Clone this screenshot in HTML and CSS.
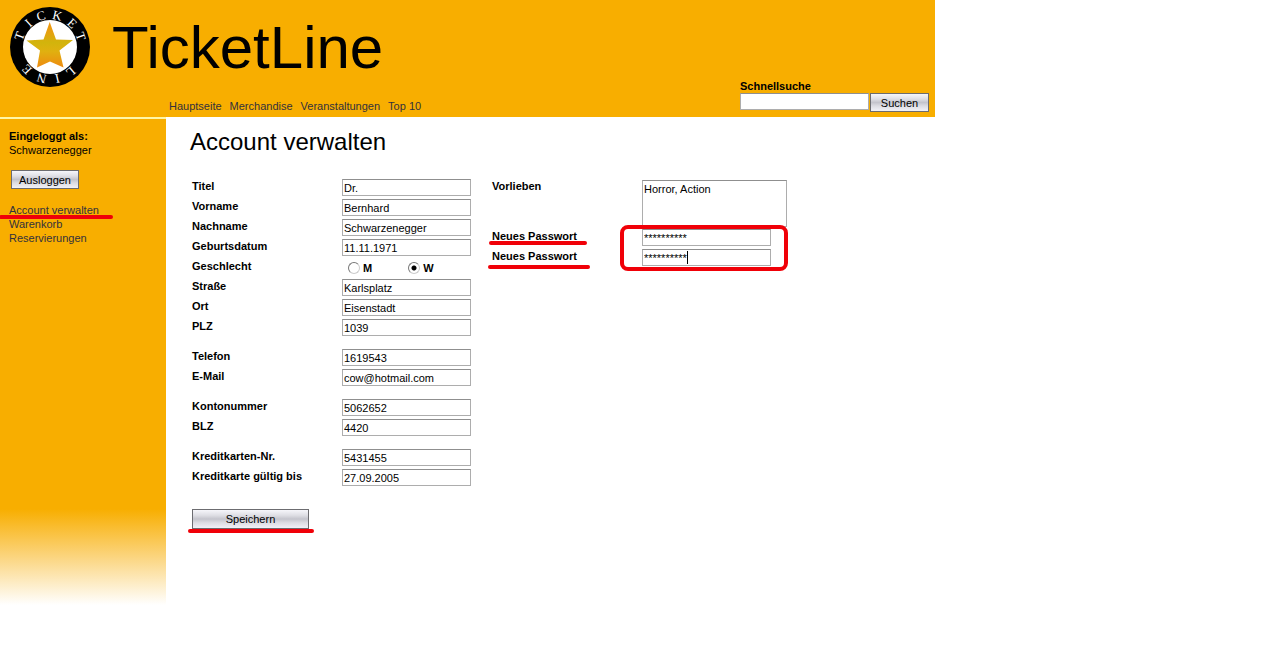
FILE: index.html
```html
<!DOCTYPE html>
<html lang="de">
<head>
<meta charset="utf-8">
<title>TicketLine - Account verwalten</title>
<link rel="stylesheet" href="styles.css">
</head>
<body>
<header class="header">
  <div class="brand">
    <div class="brand-row">
      <svg class="logo" viewBox="0 0 80 80" role="img" aria-label="TicketLine Logo">
        <defs>
          <linearGradient id="star" x1="0" y1="0" x2="0" y2="1">
            <stop offset="0" stop-color="#f0940c"/>
            <stop offset="0.22" stop-color="#e6a010"/>
            <stop offset="0.45" stop-color="#d2b40c"/>
            <stop offset="0.65" stop-color="#e0b010"/>
            <stop offset="1" stop-color="#ee8a10"/>
          </linearGradient>
        </defs>
        <circle cx="40" cy="40" r="40" fill="#000"/>
        <circle cx="40" cy="40" r="27" fill="#fff"/>
        <path fill="url(#star)" d="M39.700 15L46 32.500L63 33L49.500 43.500L53.500 60.500L40 54.500L27 60.500L30 43.500L16.500 33.500L33.500 32.500Z"/>
        <g class="logo-text">
          <text x="40" y="12" transform="rotate(-70 40 40)">T</text>
          <text x="40" y="12" transform="rotate(-42 40 40)">I</text>
          <text x="40" y="12" transform="rotate(-16 40 40)">C</text>
          <text x="40" y="12" transform="rotate(13 40 40)">K</text>
          <text x="40" y="12" transform="rotate(43 40 40)">E</text>
          <text x="40" y="12" transform="rotate(71 40 40)">T</text>
          <text x="40" y="12" transform="rotate(140 40 40)">L</text>
          <text x="40" y="12" transform="rotate(167 40 40)">I</text>
          <text x="40" y="12" transform="rotate(195 40 40)">N</text>
          <text x="40" y="12" transform="rotate(226 40 40)">E</text>
        </g>
      </svg>
      <div class="brand-name">TicketLine</div>
    </div>
    <nav class="top-nav">
      <a href="#">Hauptseite</a>
      <a href="#">Merchandise</a>
      <a href="#">Veranstaltungen</a>
      <a href="#">Top 10</a>
    </nav>
  </div>
  <form class="search">
    <label for="suche">Schnellsuche</label>
    <div class="search-row">
      <input class="field" id="suche" type="text">
      <button class="btn btn-search" type="button">Suchen</button>
    </div>
  </form>
</header>
<div class="page">
  <aside class="sidebar">
    <strong>Eingeloggt als:</strong>
    <span>Schwarzenegger</span>
    <button class="btn btn-logout" type="button">Ausloggen</button>
    <nav class="side-nav">
      <a class="marked" href="#">Account verwalten</a>
      <a href="#">Warenkorb</a>
      <a href="#">Reservierungen</a>
    </nav>
  </aside>
  <main class="main">
    <h1>Account verwalten</h1>
    <form>
      <div class="columns">
        <div class="column">
          <div class="group">
            <div class="row"><label for="titel">Titel</label><input class="field" id="titel" type="text" value="Dr."></div>
            <div class="row"><label for="vorname">Vorname</label><input class="field" id="vorname" type="text" value="Bernhard"></div>
            <div class="row"><label for="nachname">Nachname</label><input class="field" id="nachname" type="text" value="Schwarzenegger"></div>
            <div class="row"><label for="geburt">Geburtsdatum</label><input class="field" id="geburt" type="text" value="11.11.1971"></div>
            <div class="row" role="radiogroup" aria-labelledby="geschlecht">
              <span id="geschlecht">Geschlecht</span>
              <div class="radios">
                <label><input type="radio" name="g">M</label>
                <label><input type="radio" name="g" checked>W</label>
              </div>
            </div>
            <div class="row"><label for="strasse">Straße</label><input class="field" id="strasse" type="text" value="Karlsplatz"></div>
            <div class="row"><label for="ort">Ort</label><input class="field" id="ort" type="text" value="Eisenstadt"></div>
            <div class="row"><label for="plz">PLZ</label><input class="field" id="plz" type="text" value="1039"></div>
          </div>
          <div class="group">
            <div class="row"><label for="telefon">Telefon</label><input class="field" id="telefon" type="text" value="1619543"></div>
            <div class="row"><label for="email">E-Mail</label><input class="field" id="email" type="text" value="cow@hotmail.com"></div>
          </div>
          <div class="group">
            <div class="row"><label for="konto">Kontonummer</label><input class="field" id="konto" type="text" value="5062652"></div>
            <div class="row"><label for="blz">BLZ</label><input class="field" id="blz" type="text" value="4420"></div>
          </div>
          <div class="group">
            <div class="row"><label for="karte">Kreditkarten-Nr.</label><input class="field" id="karte" type="text" value="5431455"></div>
            <div class="row"><label for="gueltig">Kreditkarte gültig bis</label><input class="field" id="gueltig" type="text" value="27.09.2005"></div>
          </div>
        </div>
        <div class="column">
          <div class="row row-tall"><label for="vorlieben">Vorlieben</label><textarea class="field area" id="vorlieben">Horror, Action</textarea></div>
          <div class="passwords">
            <div class="row"><label class="mark-near" for="pw1">Neues Passwort</label><input class="field" id="pw1" type="text" value="**********"></div>
            <div class="row"><label class="mark-far" for="pw2">Neues Passwort</label><div class="caret-field"><input class="field" id="pw2" type="text" value="**********"></div></div>
          </div>
        </div>
      </div>
      <div class="save"><button class="btn btn-save" type="button">Speichern</button></div>
    </form>
  </main>
</div>
</body>
</html>
```
FILE: styles.css
```css
*, *::before, *::after { box-sizing: border-box; }
body {
  margin: 0;
  background: #fff;
  color: #000;
  font: 11px/14px "Liberation Sans", Arial, sans-serif;
}
a { color: #33313d; text-decoration: none; }

.header {
  display: flex;
  justify-content: space-between;
  align-items: flex-end;
  max-width: 935px;
  padding: 7px 6px 4px 10px;
  background: #f8ae00;
}
.brand-row { display: flex; gap: 22px; }
.logo { width: 80px; height: 80px; }
.logo-text {
  fill: #fff;
  font: 13px "Liberation Serif", serif;
  text-anchor: middle;
}
.brand-name { padding-top: 11px; font-size: 60px; line-height: 60px; }
.top-nav { display: flex; gap: 8px; padding: 12px 0 0 159px; }
.search { padding-bottom: 1px; }
.search label { display: block; font-weight: bold; }
.search-row { display: flex; gap: 1px; align-items: flex-start; }

.field {
  width: 129px;
  height: 17px;
  margin: 0;
  padding: 0 1px;
  border: 1px solid #adadad;
  border-top-color: #8f8f8f;
  border-radius: 0;
  background: #fff;
  color: #000;
  font: 11px "Liberation Sans", Arial, sans-serif;
  outline: 0;
}
.area {
  width: 145px;
  height: 47px;
  padding: 2px 1px;
  resize: none;
}
.btn {
  height: 19px;
  padding: 0;
  border: 1px solid #6c6c70;
  border-radius: 0;
  background: linear-gradient(#f6f6fa, #dedee4 30%, #c4c4cc 50%, #dcdce2 70%, #f2f2f8);
  color: #000;
  font: 11px "Liberation Sans", Arial, sans-serif;
}
.btn-search { width: 59px; height: 19px; }
.btn-logout { width: 68px; margin: 13px 0 0 2px; }
.btn-save { width: 117px; height: 20px; }

.page { display: flex; }
.sidebar {
  display: flex;
  flex-direction: column;
  align-items: flex-start;
  width: 166px;
  min-height: 488px;
  padding: 10px 9px;
  border-top: 2px solid #fff6a8;
  background: linear-gradient(#f8ae00 calc(100% - 96px), #fbd57f calc(100% - 48px), #fff);
}
.side-nav { display: flex; flex-direction: column; padding-top: 14px; }

.main { flex: 1; padding: 11px 24px; }
h1 { margin: 0; font-size: 24px; line-height: 28px; font-weight: normal; }
.columns { display: flex; padding: 20px 0 0 2px; }
.column { width: 300px; }
.group { padding-bottom: 10px; }
.row {
  display: grid;
  grid-template-columns: 150px 1fr;
  align-items: end;
  min-height: 20px;
  font-weight: bold;
  line-height: 20px;
}
.row-tall { align-items: start; height: 50px; }
.row-tall .area { margin-top: 4px; }
.radios { display: flex; gap: 36px; padding-left: 6px; }
.radios label { display: flex; align-items: center; gap: 3px; height: 16px; }
.radios input {
  appearance: none;
  width: 12px;
  height: 12px;
  margin: 0;
  border: 1px solid #777;
  border-right-color: #ccc;
  border-bottom-color: #ccc;
  border-radius: 50%;
}
.radios input:checked { background: radial-gradient(circle, #000 2px, #fff 3px); }
.save { padding: 13px 0 0 2px; }

/* Red pen marks lie over the controls. */
.marked, .mark-near, .mark-far, .passwords, .caret-field, .btn-save { position: relative; }
.marked::after, .mark-near::after, .mark-far::after, .btn-save::after {
  content: "";
  position: absolute;
  height: 4px;
  border-radius: 2px;
  background: #f00008;
}
.marked::after { left: -10px; top: 12px; width: 114px; }
.mark-near::after { left: -3px; top: 15px; width: 98px; }
.mark-far::after { left: -4px; top: 19px; width: 102px; }
.btn-save::after { left: -5px; top: 19px; width: 126px; }
.passwords::after {
  content: "";
  position: absolute;
  left: 128px;
  top: -1px;
  width: 168px;
  height: 46px;
  border: 4px solid #f00008;
  border-radius: 8px;
  pointer-events: none;
}
.caret-field { display: flex; }
.caret-field::after {
  content: "";
  position: absolute;
  left: 45px;
  top: 2px;
  width: 1px;
  height: 13px;
  background: #000;
}
```
